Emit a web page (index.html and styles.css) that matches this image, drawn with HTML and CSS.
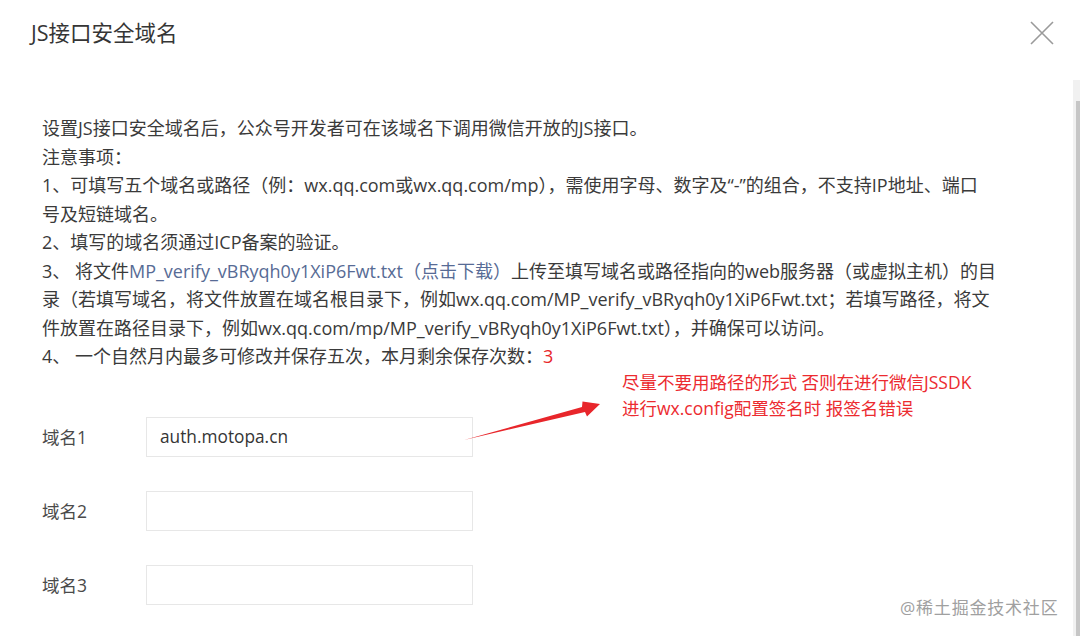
FILE: index.html
```html
<!DOCTYPE html>
<html lang="zh-CN">
<head>
<meta charset="utf-8">
<title>JS接口安全域名</title>
<link rel="stylesheet" href="styles.css">
</head>
<body>
<div class="dialog">
  <header class="dlg-head">
    <h3 class="dlg-title">JS接口安全域名</h3>
    <button class="dlg-close" aria-label="关闭">
      <svg width="24" height="24" viewBox="0 0 24 24"><path d="M1 1 L23 23 M23 1 L1 23" stroke="#9a9a9a" stroke-width="1.6" fill="none"/></svg>
    </button>
  </header>
  <div class="dlg-body">
    <div class="notes">
      <p class="line">设置JS接口安全域名后，公众号开发者可在该域名下调用微信开放的JS接口。</p>
      <p class="line">注意事项：</p>
      <p class="line">1、可填写五个域名或路径（例：wx.qq.com或wx.qq.com/mp），需使用字母、数字及“-”的组合，不支持IP地址、端口</p>
      <p class="line">号及短链域名。</p>
      <p class="line">2、填写的域名须通过ICP备案的验证。</p>
      <p class="line">3、 将文件<a class="link" href="#">MP_verify_vBRyqh0y1XiP6Fwt.txt（点击下载）</a>上传至填写域名或路径指向的web服务器（或虚拟主机）的目</p>
      <p class="line">录（若填写域名，将文件放置在域名根目录下，例如wx.qq.com/MP_verify_vBRyqh0y1XiP6Fwt.txt；若填写路径，将文</p>
      <p class="line">件放置在路径目录下，例如wx.qq.com/mp/MP_verify_vBRyqh0y1XiP6Fwt.txt），并确保可以访问。</p>
      <p class="line">4、 一个自然月内最多可修改并保存五次，本月剩余保存次数：<span class="count">3</span></p>
    </div>
    <form class="domain-form">
      <div class="row"><label class="row-label">域名1</label><div class="input">auth.motopa.cn</div></div>
      <div class="row"><label class="row-label">域名2</label><div class="input"></div></div>
      <div class="row"><label class="row-label">域名3</label><div class="input"></div></div>
    </form>
  </div>

  <div class="annotation">
    <p>尽量不要用路径的形式 否则在进行微信JSSDK</p>
    <p>进行wx.config配置签名时 报签名错误</p>
  </div>
  <svg class="arrow" width="150" height="50" viewBox="0 0 150 50">
    <path d="M4 44 L122 11 L122.5 5.5 L140 8 L127 20.5 L125 16 Z" fill="#e8262b"/>
  </svg>

  <div class="scrollbar"><div class="thumb"></div></div>
  <div class="watermark">@稀土掘金技术社区</div>
</div>
</body>
</html>
```
FILE: styles.css
```css
* { box-sizing: border-box; }
html, body { margin: 0; padding: 0; background: #fff; }
body {
  font-family: "Open Sans", "Noto Sans CJK SC", "Noto Sans", sans-serif;
  color: #3a3a3a;
}
.dialog {
  position: relative;
  width: 1080px;
  height: 636px;
  overflow: hidden;
  background: #fff;
}
.dlg-head {
  display: flex;
  justify-content: space-between;
  align-items: center;
  height: 66px;
  padding: 0 26px 0 31px;
}
.dlg-title {
  margin: 0;
  font-size: 21.5px;
  font-weight: normal;
  color: #353535;
  line-height: 1;
}
.dlg-close {
  border: 0;
  background: none;
  padding: 0;
  width: 24px;
  height: 24px;
  display: flex;
}
.dlg-body {
  padding: 48px 0 0 42px;
}
.notes { font-size: 18px; line-height: 28.5px; }
.line { margin: 0; white-space: nowrap; }
.link { color: #576b95; text-decoration: none; }
.count { color: #e8262b; }

.domain-form {
  margin-top: 46px;
  display: flex;
  flex-direction: column;
  gap: 34px;
}
.row { display: flex; align-items: center; }
.row-label {
  width: 104px;
  font-size: 17.5px;
  color: #4a4a4a;
}
.input {
  width: 327px;
  height: 40px;
  border: 1px solid #e7e7e7;
  padding: 0 13px;
  font-size: 17.3px;
  line-height: 38px;
  color: #353535;
}

.annotation {
  position: absolute;
  left: 622px;
  top: 369px;
  color: #ec2b30;
  font-size: 17.5px;
  line-height: 26px;
}
.annotation p { margin: 0; }
.arrow {
  position: absolute;
  left: 460px;
  top: 396px;
}
.scrollbar {
  position: absolute;
  right: 0;
  top: 80px;
  bottom: 0;
  width: 7px;
  background: #f1f1f1;
}
.thumb {
  margin: 21px 0 0 3px;
  height: 600px;
  background: #c6c6c6;
}
.watermark {
  position: absolute;
  left: 900px;
  top: 594px;
  font-size: 17px;
  color: #a0a0a0;
  letter-spacing: 0.8px;
}
```
